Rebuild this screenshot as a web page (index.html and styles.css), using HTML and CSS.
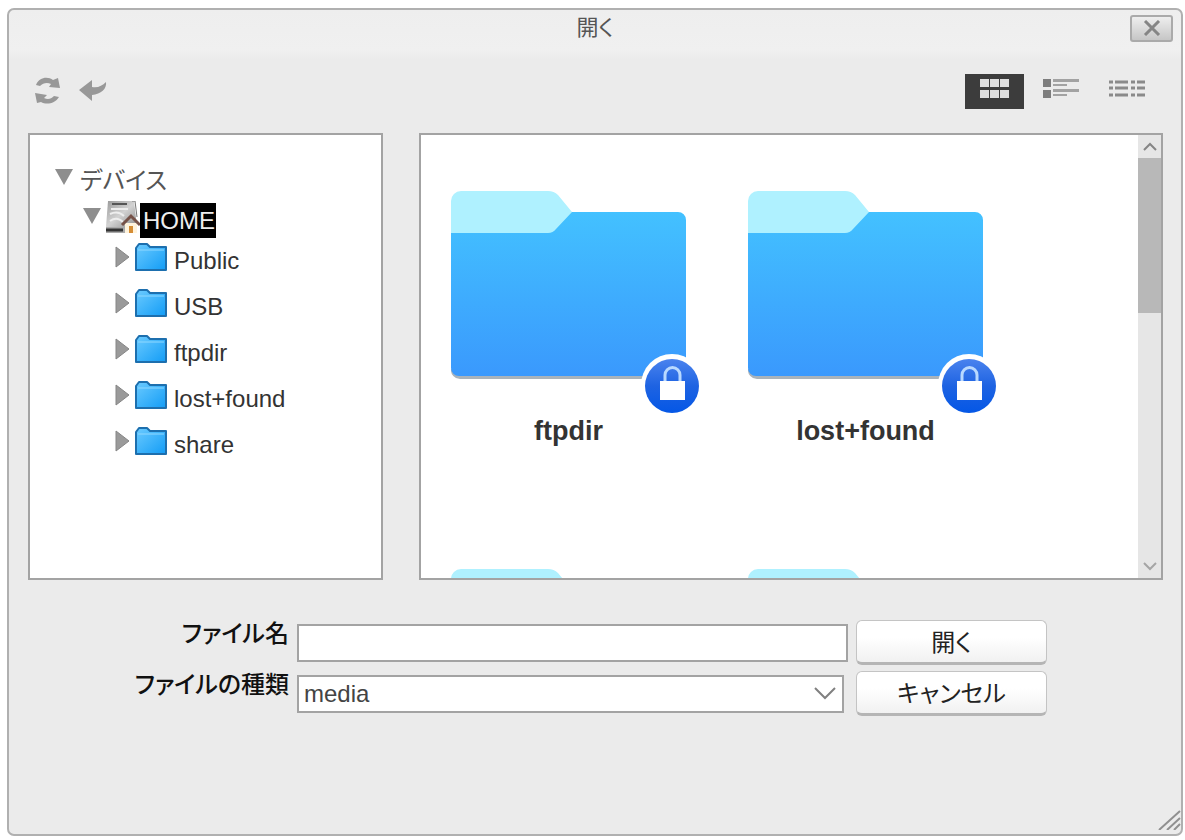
FILE: index.html
```
<!DOCTYPE html>
<html lang="ja">
<head>
<meta charset="utf-8">
<meta name="viewport" content="width=device-width, initial-scale=1">
<title>開く</title>
<link rel="stylesheet" href="styles.css">
</head>
<body>
<svg class="defs" aria-hidden="true">
  <defs>
    <linearGradient id="folder-front" x1="0" y1="0" x2="0" y2="1">
      <stop offset="0" stop-color="#43c1ff"/><stop offset="1" stop-color="#3a99fd"/>
    </linearGradient>
    <linearGradient id="badge-fill" x1="0" y1="0" x2="0" y2="1">
      <stop offset="0" stop-color="#4a83ee"/><stop offset="0.5" stop-color="#1e63e2"/><stop offset="1" stop-color="#0457e6"/>
    </linearGradient>
    <linearGradient id="mini-fill" x1="0" y1="0" x2="1" y2="1">
      <stop offset="0" stop-color="#6ccbff"/><stop offset="1" stop-color="#129cf6"/>
    </linearGradient>
    <linearGradient id="drive-fill" x1="0" y1="0" x2="1" y2="1">
      <stop offset="0" stop-color="#999"/><stop offset="0.5" stop-color="#d2d2d2"/><stop offset="1" stop-color="#8d8d8d"/>
    </linearGradient>
    <symbol id="folder" viewBox="0 0 250 224">
      <path d="M0 178a9 9 0 0 0 9 10H226a9 9 0 0 0 9-10Z" fill="#a9b3bb"/>
      <path d="M0 40H102L120 21H227a8 8 0 0 1 8 8V177a8 8 0 0 1-8 8H8a8 8 0 0 1-8-8Z" fill="url(#folder-front)"/>
      <path d="M0 42V10A10 10 0 0 1 10 0H97q6 0 10 4L121 21 105 38q-3 4-8 4Z" fill="#aff1ff"/>
    </symbol>
    <symbol id="lock-badge" viewBox="0 0 64 64">
      <circle cx="32" cy="32" r="31" fill="#fff"/>
      <circle cx="32" cy="33" r="27" fill="url(#badge-fill)"/>
      <path d="M25 29V22a7 7 0 0 1 15 0V29" fill="none" stroke="#b9d9ff" stroke-width="3"/>
      <path d="M20 28H45V47H20Z" fill="#fff"/>
    </symbol>
    <symbol id="mini-folder" viewBox="0 0 32 28">
      <path d="M1 27V5L4 1H12L15 4H31V27Z" fill="url(#mini-fill)" stroke="#1d6fae" stroke-width="2" stroke-linejoin="round"/>
      <path d="M3 7H29" stroke="#8fd8ff" stroke-width="1"/>
    </symbol>
    <symbol id="arrow-right" viewBox="0 0 15 22"><path d="M1 1 14 11 1 21Z" fill="#9a9a9a" stroke="#868686"/></symbol>
    <symbol id="arrow-down" viewBox="0 0 18 16"><path d="M0 0H18L9 16Z" fill="#8e8e8e"/></symbol>
  </defs>
</svg>

<main class="dialog" role="dialog" aria-labelledby="dialog-title">
  <header class="titlebar">
    <h1 class="title" id="dialog-title">開く</h1>
    <button class="close" type="button" aria-label="閉じる">
      <svg width="18" height="16" viewBox="0 0 18 16"><path d="M2 1 16 15M16 1 2 15" stroke="#858585" stroke-width="3"/></svg>
    </button>
  </header>

  <div class="toolbar">
    <div class="tools">
      <button class="tool" type="button" aria-label="更新">
        <svg width="25" height="27" viewBox="0 0 25 27" fill="#989898">
          <path d="M1 8C4 0 13-1 18 3L23 1 25 11 14 10 16 7C12 5 8 6 5 9Z"/>
          <path d="M24 20C20 27 11 28 6 25L2 26 0 16 12 18 9 21C13 23 16 22 19 19Z"/>
        </svg>
      </button>
      <button class="tool" type="button" aria-label="戻る">
        <svg width="28" height="21" viewBox="0 0 28 21"><path d="M0 10 13 0V7C19 8 23 6 27 2 28 9 22 14 13 15V21Z" fill="#989898"/></svg>
      </button>
    </div>
    <div class="views">
      <button class="view view-active" type="button" aria-label="アイコン">
        <svg width="29" height="19" viewBox="0 0 29 19" fill="#dedede"><path d="M0 0H9V8H0ZM10 0H19V8H10ZM20 0H29V8H20ZM0 11H9V19H0ZM10 11H19V19H10ZM20 11H29V19H20Z"/></svg>
      </button>
      <button class="view" type="button" aria-label="詳細">
        <svg width="36" height="19" viewBox="0 0 36 19"><path d="M0 0H8V8H0ZM0 11H8V19H0Z" fill="#7d7d7d"/><path d="M10 0H36V3H10ZM10 5H24V7H10ZM10 10H36V13H10ZM10 15H24V17H10Z" fill="#a2a2a2"/></svg>
      </button>
      <button class="view" type="button" aria-label="一覧">
        <svg width="36" height="17" viewBox="0 0 36 17"><path d="M0 2H4M6 2H19M22 2H26M28 2H36M0 8H4M6 8H19M22 8H26M28 8H36M0 15H4M6 15H19M22 15H26M28 15H36" stroke="#8a8a8a" stroke-width="3"/></svg>
      </button>
    </div>
  </div>

  <div class="panels">
    <nav class="tree" aria-label="デバイス">
      <div class="node node-root">
        <svg class="down"><use href="#arrow-down"/></svg><span class="root-label">デバイス</span>
      </div>
      <div class="node node-home">
        <svg class="down"><use href="#arrow-down"/></svg>
        <svg class="drive" viewBox="0 0 34 32">
          <path d="M2 0H28L31 26H0Z" fill="url(#drive-fill)"/>
          <path d="M26 0H29L31 16" fill="none" stroke="#777" stroke-width="1"/>
          <path d="M6 3H21" stroke="#555" stroke-width="2"/>
          <path d="M5 8H22M4 13Q12 9 18 15M4 20Q11 15 17 21" fill="none" stroke="#eee" stroke-width="2"/>
          <path d="M0 26H31V32H0Z" fill="#aaa"/><path d="M0 29H17" stroke="#333" stroke-width="3"/>
          <path d="M19 22H31V32H19Z" fill="#fff3dc"/>
          <path d="M16 24 25 15 34 24" fill="none" stroke="#765248" stroke-width="3"/>
          <path d="M23 25H27V32H23Z" fill="#d58d35"/>
        </svg>
        <span class="selected">HOME</span>
      </div>
      <ul class="children">
        <li class="leaf"><svg class="right"><use href="#arrow-right"/></svg><svg class="mini"><use href="#mini-folder"/></svg><span class="leaf-label">Public</span></li>
        <li class="leaf"><svg class="right"><use href="#arrow-right"/></svg><svg class="mini"><use href="#mini-folder"/></svg><span class="leaf-label">USB</span></li>
        <li class="leaf"><svg class="right"><use href="#arrow-right"/></svg><svg class="mini"><use href="#mini-folder"/></svg><span class="leaf-label">ftpdir</span></li>
        <li class="leaf"><svg class="right"><use href="#arrow-right"/></svg><svg class="mini"><use href="#mini-folder"/></svg><span class="leaf-label">lost+found</span></li>
        <li class="leaf"><svg class="right"><use href="#arrow-right"/></svg><svg class="mini"><use href="#mini-folder"/></svg><span class="leaf-label">share</span></li>
      </ul>
    </nav>

    <section class="files" aria-label="ファイル">
      <div class="grid">
        <figure class="item">
          <div class="art"><svg class="folder"><use href="#folder"/></svg><svg class="badge"><use href="#lock-badge"/></svg></div>
          <figcaption class="name">ftpdir</figcaption>
        </figure>
        <figure class="item">
          <div class="art"><svg class="folder"><use href="#folder"/></svg><svg class="badge"><use href="#lock-badge"/></svg></div>
          <figcaption class="name">lost+found</figcaption>
        </figure>
        <figure class="item"><div class="art"><svg class="folder"><use href="#folder"/></svg></div></figure>
        <figure class="item"><div class="art"><svg class="folder"><use href="#folder"/></svg></div></figure>
      </div>
      <div class="scrollbar" aria-hidden="true">
        <div class="step"><svg width="14" height="9" viewBox="0 0 14 9"><path d="M1 8 7 2 13 8" fill="none" stroke="#858585" stroke-width="2"/></svg></div>
        <div class="track"><div class="thumb"></div></div>
        <div class="step"><svg width="14" height="9" viewBox="0 0 14 9"><path d="M1 1 7 7 13 1" fill="none" stroke="#a5a5a5" stroke-width="2"/></svg></div>
      </div>
    </section>
  </div>

  <form class="form">
    <label class="label" for="filename">ファイル名</label>
    <input class="field" id="filename" type="text">
    <button class="action" type="submit">開く</button>
    <label class="label" for="filetype">ファイルの種類</label>
    <div class="select-wrap">
      <select class="field" id="filetype"><option>media</option></select>
      <svg class="chevron" viewBox="0 0 22 13"><path d="M1 1 11 11 21 1" fill="none" stroke="#808080" stroke-width="2"/></svg>
    </div>
    <button class="action" type="button">キャンセル</button>
  </form>

  <svg class="grip" viewBox="0 0 23 20" aria-hidden="true"><path d="M1 20 22 1M9 20 22 8M16 20 22 14" fill="none" stroke="#909090" stroke-width="2"/></svg>
</main>
</body>
</html>
```
FILE: styles.css
```
* {
  box-sizing: border-box;
}

body {
  margin: 0;
  background: #fff;
  color: #333;
  font-family: "Liberation Sans", "Noto Sans CJK JP", sans-serif;
  font-size: 24px;
  font-feature-settings: "palt";
}

button,
input,
select {
  font: inherit;
  font-feature-settings: inherit;
  color: inherit;
}

svg {
  display: block;
  flex: none;
}

.defs {
  position: absolute;
  width: 0;
  height: 0;
}

.dialog {
  position: relative;
  display: flex;
  flex-direction: column;
  height: calc(100vh - 12px);
  margin: 8px 2px 4px 7px;
  border: 2px solid #b0b0b0;
  border-radius: 7px;
  background: linear-gradient(#eee 0, #f0f0f0 40px, #ebebeb 50px);
}

.titlebar {
  display: grid;
  grid-template-columns: 1fr auto 1fr;
  align-items: center;
  height: 36px;
  padding: 0 8px;
}

.title {
  grid-column: 2;
  margin: 0;
  color: #555;
  font-size: 22px;
  font-weight: 400;
  line-height: 32px;
}

.close {
  display: grid;
  place-items: center;
  justify-self: end;
  width: 43px;
  height: 27px;
  padding: 0;
  border: 2px solid #aaa;
  border-radius: 3px;
  background: linear-gradient(#eee, #c6c6c6);
}

.toolbar {
  display: flex;
  justify-content: space-between;
  align-items: center;
  padding: 28px 25px 24px 26px;
}

.tools,
.views {
  display: flex;
  align-items: center;
}

.tools {
  gap: 19px;
  padding-bottom: 3px;
}

.views {
  gap: 7px;
}

.tool,
.view {
  display: grid;
  place-items: center;
  padding: 0;
  border: 0;
  background: none;
}

.view {
  width: 59px;
  height: 35px;
  padding-bottom: 6px;
}

.view-active {
  background: #3c3c3c;
}

.panels {
  display: flex;
  flex: 1;
  gap: 36px;
  min-height: 0;
  padding: 0 18px 0 19px;
}

.tree,
.files {
  border: 2px solid #a3a3a3;
  background: #fff;
  overflow: hidden;
}

.tree {
  flex: none;
  width: 355px;
  padding: 26px 0 0 25px;
}

.node {
  display: flex;
  align-items: center;
}

.node-root {
  gap: 7px;
  height: 40px;
}

.node-home {
  gap: 5px;
  height: 38px;
  padding-left: 28px;
}

.down {
  width: 18px;
  height: 16px;
  margin-bottom: 8px;
}

.root-label {
  color: #555;
  line-height: 36px;
}

.drive {
  width: 34px;
  height: 32px;
  margin-right: -5px;
  margin-bottom: 6px;
}

.selected {
  padding: 0 1px 0 3px;
  background: #000;
  color: #eee;
  line-height: 35px;
}

.children {
  margin: 0;
  padding: 0 0 0 60px;
  list-style: none;
}

.leaf {
  display: flex;
  height: 46px;
  padding-top: 4px;
}

.right {
  width: 15px;
  height: 22px;
  margin: 3px 5px 0 0;
}

.mini {
  width: 32px;
  height: 28px;
}

.leaf-label {
  margin: 4px 0 0 7px;
  line-height: 28px;
}

.files {
  display: flex;
  flex: 1;
  min-width: 0;
}

.grid {
  display: grid;
  flex: 1;
  grid-template-columns: repeat(auto-fill, 297px);
  grid-auto-rows: 378px;
  align-content: start;
  padding: 56px 0 0 30px;
}

.item {
  margin: 0;
}

.art {
  position: relative;
}

.folder {
  width: 250px;
  height: 224px;
}

.badge {
  position: absolute;
  top: 162px;
  left: 189px;
  width: 64px;
  height: 64px;
}

.name {
  width: 235px;
  font-size: 27px;
  font-weight: 700;
  line-height: 32px;
  text-align: center;
}

.scrollbar {
  display: flex;
  flex: none;
  flex-direction: column;
  width: 23px;
  background: #e6e6e6;
}

.step {
  display: grid;
  place-items: center;
  height: 23px;
}

.track {
  flex: 1;
}

.thumb {
  height: 39%;
  background: #b8b8b8;
}

.form {
  display: grid;
  grid-template-columns: 262px 1fr 191px;
  grid-auto-rows: 45px;
  align-items: center;
  gap: 6px 8px;
  padding: 40px 134px 118px 18px;
}

.label {
  align-self: start;
  color: #111;
  font-weight: 500;
  line-height: 28px;
  text-align: right;
}

.field {
  width: 100%;
  height: 38px;
  padding: 0 5px;
  border: 2px solid #a3a3a3;
  border-radius: 0;
  background: #fff;
  color: #444;
  appearance: none;
}

.select-wrap {
  position: relative;
  margin-right: 4px;
}

.chevron {
  position: absolute;
  top: 12px;
  right: 8px;
  width: 22px;
  height: 13px;
  pointer-events: none;
}

.action {
  height: 45px;
  padding: 0 0 3px;
  border: 1px solid #c4c4c4;
  border-bottom: 3px solid #b5b5b5;
  border-radius: 6px;
  background: linear-gradient(#fff 40%, #f1f1f1);
  color: #222;
}

.grip {
  position: absolute;
  right: 0;
  bottom: 4px;
  width: 23px;
  height: 20px;
}
```
